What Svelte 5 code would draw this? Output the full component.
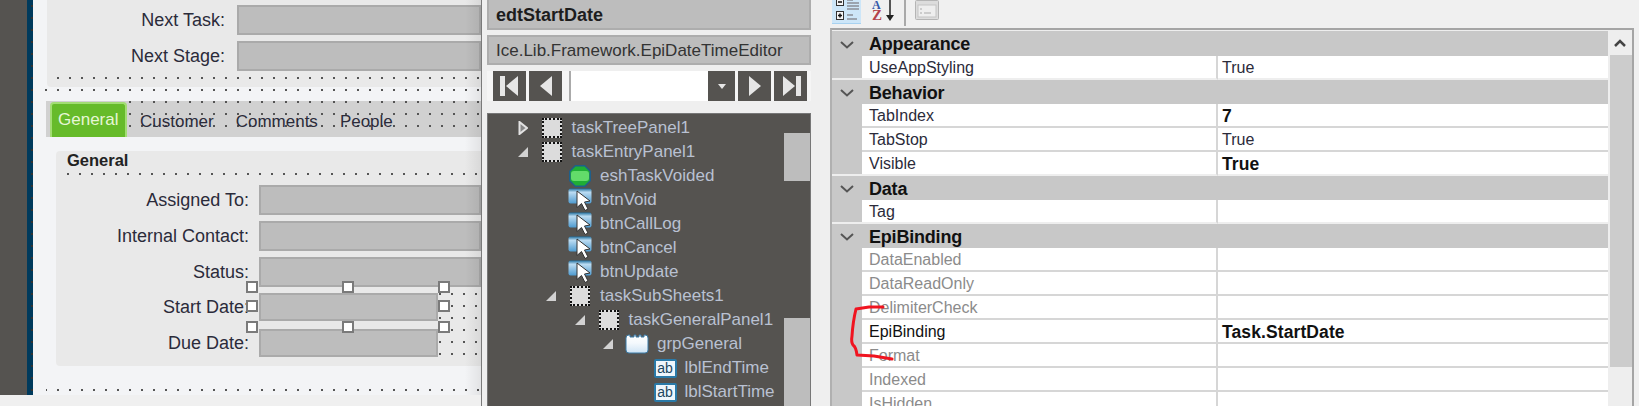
<script>
  const topFields = [
    { label: 'Next Task:' },
    { label: 'Next Stage:' }
  ];
  const tabs = ['Customer', 'Comments', 'People'];
  const groupFields = [
    { label: 'Assigned To:' },
    { label: 'Internal Contact:' },
    { label: 'Status:' },
    { label: 'Start Date:', short: true },
    { label: 'Due Date:', short: true }
  ];
  const handles = [
    [252, 287], [348, 287], [444, 287],
    [252, 306], [444, 306],
    [252, 327], [348, 327], [444, 327]
  ];

  const tree = [
    { name: 'taskTreePanel1', level: 0, icon: 'panel', exp: 'closed' },
    { name: 'taskEntryPanel1', level: 0, icon: 'panel', exp: 'open' },
    { name: 'eshTaskVoided', level: 1, icon: 'esh' },
    { name: 'btnVoid', level: 1, icon: 'btn' },
    { name: 'btnCallLog', level: 1, icon: 'btn' },
    { name: 'btnCancel', level: 1, icon: 'btn' },
    { name: 'btnUpdate', level: 1, icon: 'btn' },
    { name: 'taskSubSheets1', level: 1, icon: 'panel', exp: 'open' },
    { name: 'taskGeneralPanel1', level: 2, icon: 'panel', exp: 'open' },
    { name: 'grpGeneral', level: 3, icon: 'grp', exp: 'open' },
    { name: 'lblEndTime', level: 4, icon: 'lbl' },
    { name: 'lblStartTime', level: 4, icon: 'lbl' },
    { name: '', level: 4, icon: 'lbl' }
  ];

  const props = [
    { cat: 'Appearance' },
    { name: 'UseAppStyling', value: 'True' },
    { cat: 'Behavior' },
    { name: 'TabIndex', value: '7', bold: true },
    { name: 'TabStop', value: 'True' },
    { name: 'Visible', value: 'True', bold: true },
    { cat: 'Data' },
    { name: 'Tag', value: '' },
    { cat: 'EpiBinding' },
    { name: 'DataEnabled', value: '', muted: true },
    { name: 'DataReadOnly', value: '', muted: true },
    { name: 'DelimiterCheck', value: '', muted: true },
    { name: 'EpiBinding', value: 'Task.StartDate', bold: true },
    { name: 'Format', value: '', muted: true },
    { name: 'Indexed', value: '', muted: true },
    { name: 'IsHidden', value: '', muted: true }
  ];
</script>

<div class="app">
  <!-- form designer -->
  <section class="designer">
    <div class="strip"></div>
    <div class="rail"></div>
    <div class="canvas">
      <div class="panel">
        {#each topFields as f}
          <div class="field">
            <label class="lbl-top">{f.label}</label>
            <div class="input"></div>
          </div>
        {/each}
        <div class="dots panel-dots"></div>
      </div>
      <div class="dots gap-top"></div>

      <div class="tabbar">
        <div class="tab active">General</div>
        <div class="tab-rest dots">
          {#each tabs as t}
            <span class="tab">{t}</span>
          {/each}
        </div>
      </div>

      <div class="group">
        <div class="group-title">General</div>
        <div class="dots group-dots"></div>
        {#each groupFields as f}
          <div class="field gfield" class:short={f.short}>
            <label class="lbl-group">{f.label}</label>
            <div class="input"></div>
            {#if f.short}<div class="dots group-fill"></div>{/if}
          </div>
        {/each}
      </div>
      <div class="dots gap-bottom"></div>

      {#each handles as h}
        <span class="handle" style="left:{h[0] - 33 - 6}px;top:{h[1] - 6}px"></span>
      {/each}
      <div class="shade"></div>
    </div>
    <div class="status"></div>
  </section>

  <!-- control tree -->
  <section class="middle">
    <div class="namebox title">edtStartDate</div>
    <div class="namebox">Ice.Lib.Framework.EpiDateTimeEditor</div>

    <div class="nav">
      <button class="nav-btn" aria-label="first">
        <svg width="22" height="20" viewBox="0 0 22 20"><rect x="1" y="0" width="5" height="20" fill="#e6e6e6"/><path d="M19 0v20L7 10z" fill="#e6e6e6"/></svg>
      </button>
      <button class="nav-btn" aria-label="previous">
        <svg width="14" height="20" viewBox="0 0 14 20"><path d="M13 0v20L1 10z" fill="#e6e6e6"/></svg>
      </button>
      <div class="nav-input"></div>
      <button class="nav-drop" aria-label="open">
        <svg width="8" height="5" viewBox="0 0 8 5"><path d="M0 0h8L4 5z" fill="#e6e6e6"/></svg>
      </button>
      <button class="nav-btn" aria-label="next">
        <svg width="14" height="20" viewBox="0 0 14 20"><path d="M1 0v20l12-10z" fill="#e6e6e6"/></svg>
      </button>
      <button class="nav-btn" aria-label="last">
        <svg width="22" height="20" viewBox="0 0 22 20"><path d="M3 0v20l12-10z" fill="#e6e6e6"/><rect x="16" y="0" width="5" height="20" fill="#e6e6e6"/></svg>
      </button>
    </div>

    <div class="tree">
      <div class="tree-rows">
        {#each tree as n}
          <div class="node" style="padding-left:{32.5 + n.level * 28.5}px">
            <span class="exp">
              {#if n.exp === 'closed'}
                <svg width="10" height="14" viewBox="0 0 10 14"><path d="M1.500 1v12L9 7z" fill="#888" stroke="#e2e2e2" stroke-width="2"/></svg>
              {:else if n.exp === 'open'}
                <svg width="10" height="10" viewBox="0 0 10 10"><path d="M10 0v10H0z" fill="#d2d2d2"/></svg>
              {/if}
            </span>
            {#if n.icon === 'panel'}
              <span class="ic-panel"></span>
            {:else if n.icon === 'esh'}
              <svg class="ic" width="24" height="24" viewBox="0 0 24 24">
                <path d="M7 1h10l6 6v10l-6 6H7l-6-6V7z" fill="#1f5f8a"/>
                <path d="M7.500 2.500h9l5 5v9l-5 5h-9l-5-5v-9z" fill="#1fae35"/>
                <rect x="3" y="7" width="18" height="10" rx="3" fill="#63dc6a"/>
              </svg>
            {:else if n.icon === 'btn'}
              <svg class="ic" width="24" height="24" viewBox="0 0 24 24">
                <defs>
                  <linearGradient id="btnfill" x1="0" y1="0" x2="0" y2="1">
                    <stop offset="0" stop-color="#1f6d9c"/>
                    <stop offset="0.25" stop-color="#bcdcf2"/>
                    <stop offset="1" stop-color="#4e9bd0"/>
                  </linearGradient>
                </defs>
                <rect x="0.500" y="0.500" width="23" height="15" rx="2" fill="url(#btnfill)"/>
                <path d="M9 3l13 10-5.500 1 3.500 7-3 1.500-3.500-7-4.500 4z" fill="#fff" stroke="#333" stroke-width="1"/>
              </svg>
            {:else if n.icon === 'grp'}
              <svg class="ic" width="24" height="20" viewBox="0 0 24 20">
                <defs>
                  <linearGradient id="grpfill" x1="0" y1="0" x2="0" y2="1">
                    <stop offset="0" stop-color="#ffffff"/>
                    <stop offset="0.45" stop-color="#f4f9fd"/>
                    <stop offset="1" stop-color="#cfe4f5"/>
                  </linearGradient>
                </defs>
                <path d="M1 4q0-3 3-3h1v2h4V1h2v2h3V1h2v2h3V1h1q3 0 3 3v12q0 3-3 3H4q-3 0-3-3z" fill="url(#grpfill)" stroke="#3b7ba6" stroke-width="1"/>
              </svg>
            {:else}
              <span class="ic-label">{n.name ? 'ab' : ''}</span>
            {/if}
            <span class="node-name">{n.name}</span>
          </div>
        {/each}
      </div>
      <div class="tree-scroll">
        <svg class="tree-up" width="12" height="7" viewBox="0 0 12 7"><path d="M0 7h12L6 0z" fill="#eee"/></svg>
        <div class="thumb one"></div>
        <div class="thumb two"></div>
      </div>
    </div>
  </section>

  <!-- property grid -->
  <section class="right">
    <div class="toolbar">
      <button class="tool on" aria-label="categorized">
        <svg width="28" height="24" viewBox="0 0 28 24">
          <g fill="#f4f4f4" stroke="#333"><rect x="3.500" y="-1.500" width="7" height="8"/><rect x="3.500" y="12.500" width="7" height="8"/></g>
          <path d="M5 3h4M5 16.500h4M7 14.500v4" stroke="#111" stroke-width="1.500"/>
          <path d="M14 1h6M14 4h12M14 7h12M14 10h12M14 16h6M14 20h10" stroke="#8a8f96" stroke-width="1.500"/>
        </svg>
      </button>
      <div class="az">
        <span class="az-a">A</span><span class="az-z">Z</span>
        <svg class="az-arrow" width="8" height="22" viewBox="0 0 8 22"><path d="M4 0v16" stroke="#222" stroke-width="1.500"/><path d="M0 15h8l-4 6z" fill="#222"/></svg>
      </div>
      <div class="tool-sep"></div>
      <div class="tool-off">
        <svg width="24" height="21" viewBox="0 0 24 21">
          <rect x="0.500" y="0.500" width="23" height="19" rx="1" fill="#dcdcdc" stroke="#b4b4b4"/>
          <rect x="3" y="5" width="18" height="12" fill="#eee" stroke="#c4c4c4"/>
          <path d="M5 9h2M5 13h2M9 13h7" stroke="#aaa"/>
        </svg>
      </div>
    </div>

    <div class="grid">
      <div class="grid-body">
        {#each props as p}
          {#if p.cat}
            <div class="cat">
              <span class="cat-chev">
                <svg width="14" height="8" viewBox="0 0 14 8"><path d="M1 1l6 5.500L13 1" fill="none" stroke="#555" stroke-width="2"/></svg>
              </span>
              <span class="cat-name">{p.cat}</span>
            </div>
          {:else}
            <div class="prop">
              <span class="gutter"></span>
              <span class="pname" class:muted={p.muted} class:strong={p.name === 'EpiBinding'}>{p.name}</span>
              <span class="pval" class:bold={p.bold}>{p.value}</span>
            </div>
          {/if}
        {/each}
      </div>
      <div class="grid-scroll">
        <div class="scroll-up">
          <svg width="12" height="8" viewBox="0 0 12 8"><path d="M1 7l5-5 5 5" fill="none" stroke="#444" stroke-width="2.500"/></svg>
        </div>
        <div class="scroll-thumb"></div>
      </div>
    </div>

    <svg class="mark" width="60" height="70" viewBox="0 0 60 70">
      <path d="M43 6 L29 6 L16 8 Q13 20 12 35 Q11 41 13 44 Q16 46 17 54 L34 55 L52 58" fill="none" stroke="#f01420" stroke-width="3" stroke-linecap="round" stroke-linejoin="round"/>
    </svg>
  </section>
</div>

<style>
  :global(body) {
    margin: 0;
    background: #f0f0f0;
  }

  .app {
    display: flex;
    width: 1639px;
    height: 406px;
    overflow: hidden;
    font-family: "Liberation Sans", Arial, sans-serif;
    color: #2b2b3a;
    position: relative;
  }

  button {
    border: none;
    padding: 0;
    margin: 0;
  }

  /* designer */
  .designer {
    width: 482px;
    height: 406px;
    box-sizing: border-box;
    display: grid;
    grid-template-columns: 27px 6px 448px;
    grid-template-rows: 395px 11px;
    flex: none;
    border-right: 1px solid #7a7a7a;
  }

  .strip {
    background: #555350;
  }

  .rail {
    background-color: #003a5c;
    background-image: radial-gradient(circle at 5px 6px, #333 1px, transparent 1.4px);
    background-size: 12px 12px;
  }

  .status {
    grid-column: 1 / 4;
    background: #f0f0f0;
  }

  .canvas {
    position: relative;
    background: #f3f4f6;
    display: flex;
    flex-direction: column;
  }

  .shade {
    position: absolute;
    top: 0;
    right: 0;
    width: 16px;
    height: 100%;
    background: linear-gradient(to right, rgba(0, 0, 0, 0), rgba(0, 0, 0, 0.07));
    pointer-events: none;
  }

  .dots {
    --dx: 10px;
    background-image: radial-gradient(circle at var(--dx) 6px, #555 0.8px, transparent 1.4px);
    background-size: 12px 12px;
    background-attachment: fixed;
  }

  .panel {
    margin-left: 14px;
    height: 87px;
    box-sizing: border-box;
    padding-top: 5px;
    background: #e9e9e9;
    border-bottom-left-radius: 4px;
    display: flex;
    flex-direction: column;
    gap: 6px;
  }

  .panel-dots {
    flex: none;
    margin-top: -1px;
    margin-left: 6px;
    height: 12px;
  }

  .field {
    display: flex;
    align-items: center;
    height: 30px;
    flex: none;
  }

  .field label {
    text-align: right;
    font-size: 18px;
    flex: none;
  }

  .lbl-top {
    width: 178px;
    margin-right: 12px;
  }

  .input {
    flex: 1;
    align-self: stretch;
    background: #bdbdbd;
    border: 2px solid #aaa;
    box-sizing: border-box;
  }

  .gap-top {
    height: 14px;
    margin-left: 12px;
    flex: none;
  }

  .tabbar {
    height: 36px;
    margin-left: 13px;
    background: #d1d1d1;
    display: flex;
    flex: none;
  }

  .tab {
    font-size: 17px;
    color: #2b2b3a;
  }

  .tab.active {
    width: 77px;
    height: 35px;
    margin: 1px 0 0 4px;
    box-sizing: border-box;
    background: #66bb2a;
    color: #e6f6d6;
    border: 2px solid #a2dd73;
    border-bottom: none;
    border-radius: 4px 4px 0 0;
    padding: 6px 0 0 6px;
  }

  .tab-rest {
    flex: 1;
    display: flex;
    align-items: center;
    padding: 6px 0 0 13px;
    gap: 22px;
  }

  .group {
    margin: 14px 0 0 23px;
    height: 215px;
    box-sizing: border-box;
    background: #e9e9e9;
    border-radius: 4px 0 0 4px;
    flex: none;
    padding-top: 1px;
    display: flex;
    flex-direction: column;
  }

  .group-title {
    font-size: 16.500px;
    font-weight: 700;
    color: #222;
    margin-left: 11px;
    height: 17px;
    line-height: 17px;
  }

  .group-dots {
    --dx: 8px;
    height: 12px;
    margin: 0 0 4px 11px;
    flex: none;
  }

  .gfield {
    margin-bottom: 6px;
  }

  .gfield.short {
    height: 28px;
    margin-bottom: 8px;
  }

  .lbl-group {
    width: 193px;
    margin-right: 10px;
  }

  .gfield.short .input {
    flex: none;
    width: 179px;
  }

  .group-fill {
    --dx: 8px;
    flex: 1;
    align-self: stretch;
    margin-bottom: -8px;
  }

  .gap-bottom {
    height: 29px;
    margin-left: 13px;
    flex: none;
    -webkit-mask-image: linear-gradient(to bottom, transparent 20px, #000 21px);
    mask-image: linear-gradient(to bottom, transparent 20px, #000 21px);
  }

  .handle {
    position: absolute;
    width: 12px;
    height: 12px;
    box-sizing: border-box;
    background: #fff;
    border: 2px solid #7a7a7a;
  }

  /* middle */
  .middle {
    width: 348px;
    flex: none;
    box-sizing: border-box;
    background: #efefef;
    padding: 0 19px 0 5px;
    display: flex;
    flex-direction: column;
  }

  .namebox {
    height: 30px;
    line-height: 28px;
    flex: none;
    box-sizing: border-box;
    background: #bdbdbd;
    border: 2px solid #adadad;
    padding-left: 7px;
    font-size: 17px;
    color: #333;
    margin-bottom: 5px;
    white-space: nowrap;
  }

  .namebox.title {
    font-weight: 700;
    font-size: 18px;
    color: #1d1d1d;
    border-top: none;
    line-height: 30px;
  }

  .nav {
    height: 30px;
    margin: 1px 0 12px;
    flex: none;
    display: flex;
    background: #f5f5f5;
    padding: 0 4px 0 6px;
    gap: 3px;
  }

  .nav-btn {
    width: 33px;
    background: #555350;
    display: flex;
    align-items: center;
    justify-content: center;
  }

  .nav-input {
    flex: 1;
    margin-left: 4px;
    margin-right: -3px;
    background: #fff;
    border-left: 2px solid #aaa;
  }

  .nav-drop {
    width: 27px;
    background: #555350;
    display: flex;
    align-items: center;
    justify-content: center;
  }

  .tree {
    flex: 1;
    background: #555350;
    border: 1px solid #777;
    border-bottom: none;
    box-sizing: border-box;
    display: flex;
    overflow: hidden;
    min-height: 0;
  }

  .tree-rows {
    flex: 1;
    padding-top: 2px;
  }

  .node {
    height: 24px;
    display: flex;
    align-items: center;
    box-sizing: border-box;
  }

  .exp {
    width: 23px;
    flex: none;
    display: flex;
    align-items: center;
    justify-content: flex-start;
    margin-left: -3px;
  }

  .ic {
    flex: none;
    margin-left: -1px;
  }

  .ic-panel {
    width: 20px;
    height: 20px;
    flex: none;
    margin-left: 1px;
    margin-right: 2px;
    box-sizing: border-box;
    background: #dcdcdc;
    border: 2px dotted #111;
  }

  .ic-label {
    width: 23px;
    height: 19px;
    flex: none;
    margin-left: -1px;
    box-sizing: border-box;
    background: #eef6fc;
    border: 2px solid #2a7aa8;
    border-radius: 2px;
    font-size: 14px;
    line-height: 15px;
    text-align: center;
    color: #1c4660;
  }

  .node-name {
    margin-left: 8px;
    font-size: 17px;
    color: #b9c1d2;
    white-space: nowrap;
  }

  .tree-scroll {
    width: 26px;
    flex: none;
    position: relative;
    display: flex;
    flex-direction: column;
    align-items: center;
  }

  .tree-up {
    margin-top: 11px;
  }

  .thumb {
    width: 26px;
    background: #bdbdbd;
    flex: none;
  }

  .thumb.one {
    height: 48px;
    margin-top: 8px;
  }

  .thumb.two {
    height: 90px;
    margin-top: 137px;
  }

  /* property grid */
  .right {
    flex: 1;
    position: relative;
    display: flex;
    flex-direction: column;
    background: #f0f0f0;
    padding: 0 5px 0 0;
    min-width: 0;
  }

  .toolbar {
    height: 27px;
    flex: none;
    display: flex;
    align-items: flex-start;
    overflow: hidden;
  }

  .tool {
    width: 29px;
    height: 24px;
    margin-left: 2px;
    flex: none;
    display: flex;
    align-items: flex-end;
    justify-content: center;
    overflow: hidden;
  }

  .tool.on {
    background: #cde6f8;
    border-bottom: 1px solid #a8d2f0;
  }

  .az {
    width: 24px;
    height: 24px;
    margin-left: 10px;
    position: relative;
    flex: none;
    font-family: "Liberation Serif", serif;
    font-weight: 700;
  }

  .az-a {
    position: absolute;
    left: 1px;
    top: 0;
    font-size: 12px;
    line-height: 10px;
    color: #3559a8;
  }

  .az-z {
    position: absolute;
    left: 1px;
    top: 10px;
    line-height: 11px;
    color: #b4424a;
    font-size: 15px;
  }

  .az-arrow {
    position: absolute;
    left: 15px;
    top: 0;
  }

  .tool-sep {
    width: 2px;
    height: 26px;
    margin-left: 9px;
    background: #a9a9a9;
    flex: none;
  }

  .tool-off {
    margin-left: 9px;
    flex: none;
    display: flex;
  }

  .grid {
    flex: 1;
    min-height: 0;
    display: flex;
    background: #eee;
    border-top: 2px solid #a5a5a5;
    border-left: 2px solid #b0b0b0;
    border-right: 2px solid #a5a5a5;
    margin-top: 1px;
    overflow: hidden;
  }

  .grid-body {
    width: 776px;
    flex: none;
    padding-top: 1px;
  }

  .cat {
    height: 24px;
    box-sizing: border-box;
    padding-top: 2px;
    background: #c8c8c8;
    display: flex;
    align-items: center;
  }

  .cat:first-child {
    height: 25px;
  }

  .cat-chev {
    width: 30px;
    flex: none;
    display: flex;
    justify-content: center;
  }

  .cat-name {
    font-weight: 700;
    font-size: 18px;
    letter-spacing: -0.2px;
    margin-left: 7px;
    color: #111;
  }

  .prop {
    height: 24px;
    display: flex;
    box-sizing: border-box;
    font-size: 16px;
    line-height: 24px;
  }

  .gutter {
    width: 30px;
    flex: none;
    box-sizing: border-box;
    background: #c8c8c8;
  }

  .pname,
  .pval {
    box-sizing: border-box;
    background: #fff;
    border-bottom: 2px solid #d6d6d6;
    color: #2b2b3a;
    white-space: nowrap;
    overflow: hidden;
  }

  .pname {
    width: 356px;
    flex: none;
    padding-left: 7px;
    border-right: 2px solid #d6d6d6;
  }

  .pval {
    flex: 1;
    padding-left: 4px;
  }

  .prop:has(+ .cat) .gutter,
  .prop:has(+ .cat) .pname,
  .prop:has(+ .cat) .pval {
    border-bottom: 2px solid #eee;
  }

  .pname.muted {
    color: #8b8b8b;
  }

  .pname.strong {
    color: #111;
  }

  .pval.bold {
    font-weight: 700;
    font-size: 17.500px;
    color: #111;
    letter-spacing: 0.1px;
  }

  .grid-scroll {
    width: 24px;
    flex: 1;
    background: #eee;
    display: flex;
    flex-direction: column;
    align-items: flex-end;
  }

  .scroll-up {
    width: 100%;
    height: 25px;
    display: flex;
    align-items: center;
    justify-content: center;
    flex: none;
  }

  .scroll-thumb {
    width: 22px;
    height: 312px;
    background: #ccc;
    flex: none;
  }

  .mark {
    position: absolute;
    left: 10px;
    top: 301px;
    pointer-events: none;
  }
</style>
